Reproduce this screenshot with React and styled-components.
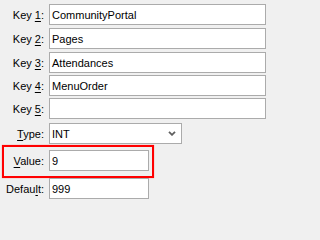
import React from 'react';
import styled, { createGlobalStyle } from 'styled-components';

const GlobalStyle = createGlobalStyle`
  html, body {
    margin: 0;
    padding: 0;
    background: #f0f0f0;
  }
  body {
    font-family: "Liberation Sans", Arial, sans-serif;
    font-size: 11px;
    color: #000;
  }
`;

const Form = styled.div`
  display: flex;
  flex-direction: column;
  padding-top: 4px;
  width: 271px;
  height: 202px;
  overflow: hidden;
  box-sizing: border-box;
`;

const Row = styled.div`
  position: relative;
  display: flex;
  align-items: center;
  gap: 5px;
  margin-top: ${(p) => p.$space || 0}px;
`;

// annotation drawn over the value row
const Highlighted = styled(Row)`
  &::after {
    content: '';
    position: absolute;
    top: -5px;
    bottom: -7px;
    left: 2px;
    width: 152px;
    box-sizing: border-box;
    border: 2px solid #ff0000;
    box-shadow: 0 0 1px rgba(255, 0, 0, 0.5);
    pointer-events: none;
  }
`;

const Label = styled.label`
  width: 44px;
  text-align: right;
  white-space: nowrap;
  line-height: 14px;

  u {
    text-decoration: underline;
    text-underline-offset: 2px;
  }
`;

const Field = styled.div`
  box-sizing: border-box;
  width: ${(p) => p.$width}px;
  height: 21px;
  padding: 0 2px;
  background: #fff;
  border: 1px solid #ababab;
  display: flex;
  align-items: center;
  white-space: nowrap;
`;

const Select = styled(Field)`
  justify-content: space-between;
  padding-right: 5px;
`;

const Chevron = () => (
  <svg width="8" height="5" viewBox="0 0 8 5">
    <path d="M1 0.8 L4 3.8 L7 0.8" fill="none" stroke="#5f5f5f" strokeWidth="1.8" />
  </svg>
);

const keys = ['CommunityPortal', 'Pages', 'Attendances', 'MenuOrder', ''];
const spacing = [0, 3, 3, 2, 2];

export default function App() {
  return (
    <>
      <GlobalStyle />
      <Form>
        {keys.map((value, i) => (
          <Row key={i} $space={spacing[i]}>
            <Label>
              Key <u>{i + 1}</u>:
            </Label>
            <Field $width={217}>{value}</Field>
          </Row>
        ))}
        <Row $space={4}>
          <Label>
            <u>T</u>ype:
          </Label>
          <Select $width={133}>
            INT
            <Chevron />
          </Select>
        </Row>
        <Highlighted $space={6}>
          <Label>
            <u>V</u>alue:
          </Label>
          <Field $width={100}>9</Field>
        </Highlighted>
        <Row $space={7}>
          <Label>
            Defau<u>l</u>t:
          </Label>
          <Field $width={100}>999</Field>
        </Row>
      </Form>
    </>
  );
}
